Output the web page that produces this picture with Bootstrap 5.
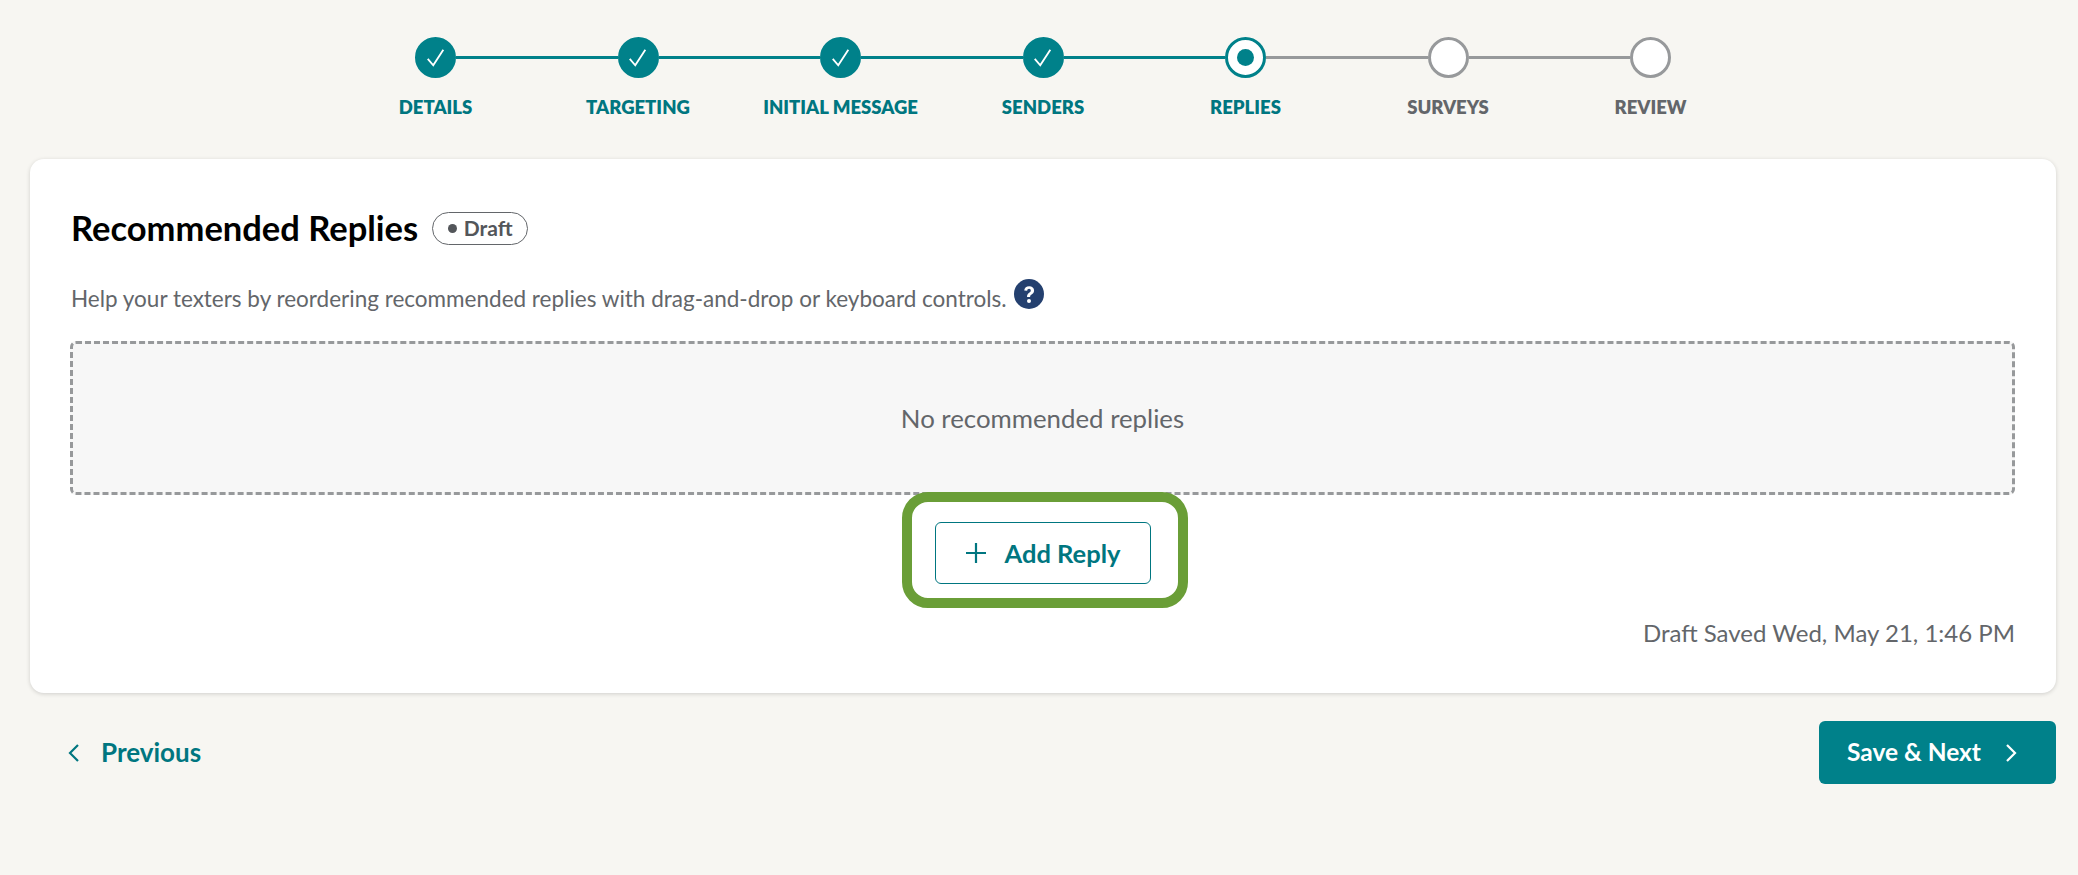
<!DOCTYPE html>
<html lang="en">
<head>
<meta charset="utf-8">
<title>Recommended Replies</title>
<link href="https://cdn.jsdelivr.net/npm/bootstrap@5.3.0/dist/css/bootstrap.min.css" rel="stylesheet">
<style>
html,body{height:100%}
body{background:#f7f6f2;font-family:Lato,"Liberation Sans",sans-serif;color:#63666a;overflow:hidden}
.stepper{padding-top:37px;padding-left:8px;height:159px}
.step-col{width:202.5px}
.step-track{height:41px}
.seg{flex:1 1 0;height:3px}
.seg-on{background:#00818a}
.seg-off{background:#97999b}
.seg-none{background:transparent}
.dot{width:41px;height:41px;border-radius:50%;flex:none;background:#fff;border:3px solid #97999b}
.dot-done{background:#00818a;border-color:#00818a}
.dot-now{border-color:#00818a}
.dot-now i{display:block;width:17px;height:17px;border-radius:50%;background:#00818a}
.step-label{margin-top:14px;font-size:18.5px;line-height:30px;font-weight:800;color:#007680;white-space:nowrap}
.step-label-off{color:#63666a}
.panel{margin:0 22px 0 30px;height:534px;background:#fff;border-radius:14px;box-shadow:0 1px 4px rgba(0,0,0,.16);padding:46px 41px 0}
.panel-title{font-size:34.5px;line-height:46px;font-weight:700;color:#000;margin:0}
.pill{height:33px;width:96px;border:1px solid #63666a;border-radius:17px;font-size:21px;font-weight:700;color:#53565a;margin-left:14px}
.pill i{width:9px;height:9px;border-radius:50%;background:#53565a;display:block;margin-right:7px}
.hint{font-size:22.5px;line-height:30px;margin-top:28px}
.hint svg{margin-left:7px;margin-bottom:10px}
.empty-box{margin:22px 0 0 -1px;height:154px;border:3px dashed #97999b;border-radius:6px;background:#f7f7f7;font-size:25.8px}
.focus-wrap{margin-top:-3px;margin-left:4px;position:relative;width:286px;height:116px;border:10px solid #6a9e37;border-radius:26px;background:#fff;padding:20px 4px 0 0}
.add-btn{width:216px;height:62px;border:1px solid #007680;border-radius:6px;color:#007680;font-size:25.5px;font-weight:700;padding:0;gap:17px;background:#fff}
.saved{font-size:24px;line-height:34px;margin-top:8px}
.foot{margin:28px 22px 0 30px}
.prev-btn{color:#007680;font-size:26px;font-weight:700;padding:0;border:0;gap:22px;margin-left:38px;height:63px}
.next-btn{width:237px;height:63px;background:#00818a;border:0;border-radius:6px;color:#fff;font-size:24.5px;font-weight:700;padding:0 0 0 28px;gap:25px}
</style>
</head>
<body>
<div class="stepper d-flex justify-content-center">
  <div class="step-col text-center">
    <div class="step-track d-flex align-items-center"><span class="seg seg-none"></span><span class="dot dot-done d-flex align-items-center justify-content-center"><svg width="22" height="22" viewBox="0 0 24 24" fill="none" stroke="#fff" stroke-width="2"><path d="M3 13l6 7L20 3"/></svg></span><span class="seg seg-on"></span></div>
    <div class="step-label">DETAILS</div>
  </div>
  <div class="step-col text-center">
    <div class="step-track d-flex align-items-center"><span class="seg seg-on"></span><span class="dot dot-done d-flex align-items-center justify-content-center"><svg width="22" height="22" viewBox="0 0 24 24" fill="none" stroke="#fff" stroke-width="2"><path d="M3 13l6 7L20 3"/></svg></span><span class="seg seg-on"></span></div>
    <div class="step-label">TARGETING</div>
  </div>
  <div class="step-col text-center">
    <div class="step-track d-flex align-items-center"><span class="seg seg-on"></span><span class="dot dot-done d-flex align-items-center justify-content-center"><svg width="22" height="22" viewBox="0 0 24 24" fill="none" stroke="#fff" stroke-width="2"><path d="M3 13l6 7L20 3"/></svg></span><span class="seg seg-on"></span></div>
    <div class="step-label">INITIAL MESSAGE</div>
  </div>
  <div class="step-col text-center">
    <div class="step-track d-flex align-items-center"><span class="seg seg-on"></span><span class="dot dot-done d-flex align-items-center justify-content-center"><svg width="22" height="22" viewBox="0 0 24 24" fill="none" stroke="#fff" stroke-width="2"><path d="M3 13l6 7L20 3"/></svg></span><span class="seg seg-on"></span></div>
    <div class="step-label">SENDERS</div>
  </div>
  <div class="step-col text-center">
    <div class="step-track d-flex align-items-center"><span class="seg seg-on"></span><span class="dot dot-now d-flex align-items-center justify-content-center"><i></i></span><span class="seg seg-off"></span></div>
    <div class="step-label">REPLIES</div>
  </div>
  <div class="step-col text-center">
    <div class="step-track d-flex align-items-center"><span class="seg seg-off"></span><span class="dot"></span><span class="seg seg-off"></span></div>
    <div class="step-label step-label-off">SURVEYS</div>
  </div>
  <div class="step-col text-center">
    <div class="step-track d-flex align-items-center"><span class="seg seg-off"></span><span class="dot"></span><span class="seg seg-none"></span></div>
    <div class="step-label step-label-off">REVIEW</div>
  </div>
</div>

<div class="panel">
  <div class="d-flex align-items-center">
    <h1 class="panel-title">Recommended Replies</h1>
    <span class="pill d-inline-flex align-items-center justify-content-center"><i></i>Draft</span>
  </div>
  <div class="hint d-flex align-items-center">Help your texters by reordering recommended replies with drag-and-drop or keyboard controls.
    <svg width="30" height="30" viewBox="0 0 30 30"><circle cx="15" cy="15" r="15" fill="#24406f"/><path d="M10.2 11.6c.3-2.8 2.2-4.3 5-4.3 2.900 0 4.900 1.700 4.900 4.100 0 2-1.100 3-2.500 4-1.100.8-1.500 1.300-1.500 2.600h-3.100c0-2.200.7-3.200 2.200-4.300 1-.7 1.600-1.200 1.600-2.200 0-1-.7-1.700-1.700-1.700-1.100 0-1.800.7-1.900 1.900z" fill="#fff"/><circle cx="15" cy="22" r="2" fill="#fff"/></svg>
  </div>
  <div class="empty-box d-flex align-items-center justify-content-center">No recommended replies</div>
  <div class="d-flex justify-content-center">
    <div class="focus-wrap d-flex align-items-start justify-content-center">
      <button type="button" class="btn add-btn d-inline-flex align-items-center justify-content-center"><svg width="22" height="22" viewBox="0 0 22 22" stroke="#007680" stroke-width="2.200"><path d="M11 1v20M1 11h20"/></svg>Add Reply</button>
    </div>
  </div>
  <div class="saved text-end">Draft Saved Wed, May 21, 1:46 PM</div>
</div>

<div class="foot d-flex justify-content-between align-items-center">
  <button type="button" class="btn prev-btn d-inline-flex align-items-center"><svg width="11" height="18" viewBox="0 0 11 18" fill="none" stroke="#007680" stroke-width="2.200"><path d="M10 1L2 9l8 8"/></svg>Previous</button>
  <button type="button" class="btn next-btn d-inline-flex align-items-center">Save &amp; Next<svg width="11" height="18" viewBox="0 0 11 18" fill="none" stroke="#fff" stroke-width="2.200"><path d="M1 1l8 8-8 8"/></svg></button>
</div>
<script src="https://cdn.jsdelivr.net/npm/bootstrap@5.3.0/dist/js/bootstrap.bundle.min.js"></script>
</body>
</html>
